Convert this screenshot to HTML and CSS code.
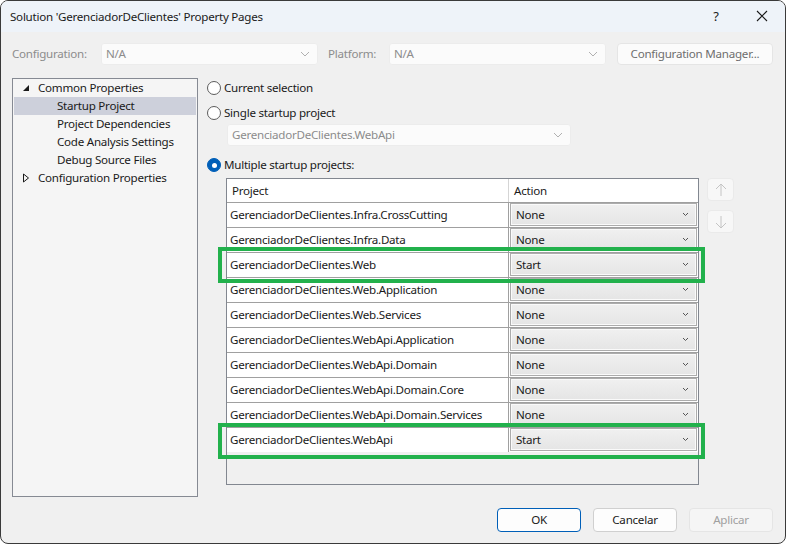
FILE: index.html
```html
<!DOCTYPE html>
<html>
<head>
<meta charset="utf-8">
<link rel="stylesheet" href="styles.css">
</head>
<body>
<div class="window">
  <div class="titlebar">
    <span class="title">Solution 'GerenciadorDeClientes' Property Pages</span>
    <span class="tb-help">?</span>
    <span class="tb-close"><svg width="12" height="12" viewBox="0 0 12 12"><path d="M1 1 L11 11 M11 1 L1 11" stroke="#1a1a1a" stroke-width="1.1" fill="none"/></svg></span>
  </div>
  <div class="content">
    <div class="config-row">
      <span class="lbl lbl-config">Configuration:</span>
      <div class="combo combo-config"><span>N/A</span><svg class="chev" width="10" height="6" viewBox="0 0 10 6"><path d="M1 1 L5 5 L9 1" stroke="#b0b0b0" fill="none"/></svg></div>
      <span class="lbl lbl-platform">Platform:</span>
      <div class="combo combo-platform"><span>N/A</span><svg class="chev" width="10" height="6" viewBox="0 0 10 6"><path d="M1 1 L5 5 L9 1" stroke="#b0b0b0" fill="none"/></svg></div>
      <div class="btn btn-cm">Configuration Manager...</div>
    </div>
    <div class="main">
      <div class="tree">
        <div class="node"><svg class="tri" width="8" height="8" viewBox="0 0 8 8"><path d="M7 1 L7 7 L1 7 Z" fill="#1a1a1a"/></svg><span>Common Properties</span></div>
        <div class="node child selected"><span>Startup Project</span></div>
        <div class="node child"><span>Project Dependencies</span></div>
        <div class="node child"><span>Code Analysis Settings</span></div>
        <div class="node child"><span>Debug Source Files</span></div>
        <div class="node"><svg class="tri tri-c" width="8" height="10" viewBox="0 0 8 10"><path d="M1.5 1 L6.5 5 L1.5 9 Z" fill="none" stroke="#1a1a1a"/></svg><span>Configuration Properties</span></div>
      </div>
      <div class="right">
        <div class="radio-row r1"><span class="radio"></span><span class="rtext">Current selection</span></div>
        <div class="radio-row r2"><span class="radio"></span><span class="rtext">Single startup project</span></div>
        <div class="combo combo-single"><span>GerenciadorDeClientes.WebApi</span><svg class="chev" width="10" height="6" viewBox="0 0 10 6"><path d="M1 1 L5 5 L9 1" stroke="#b0b0b0" fill="none"/></svg></div>
        <div class="radio-row r3"><span class="radio on"></span><span class="rtext">Multiple startup projects:</span></div>
        <div class="grid-area">
          <div class="grid">
            <div class="hrow"><div class="hcell hp">Project</div><div class="hcell ha">Action</div></div>
            <div class="row"><div class="pcell">GerenciadorDeClientes.Infra.CrossCutting</div><div class="acell"><div class="acombo">None<svg class="achev" width="7" height="5" viewBox="0 0 7 5"><path d="M1 1 L3.5 3.5 L6 1" stroke="#555" fill="none"/></svg></div></div></div>
            <div class="row"><div class="pcell">GerenciadorDeClientes.Infra.Data</div><div class="acell"><div class="acombo">None<svg class="achev" width="7" height="5" viewBox="0 0 7 5"><path d="M1 1 L3.5 3.5 L6 1" stroke="#555" fill="none"/></svg></div></div></div>
            <div class="row"><div class="pcell">GerenciadorDeClientes.Web</div><div class="acell"><div class="acombo">Start<svg class="achev" width="7" height="5" viewBox="0 0 7 5"><path d="M1 1 L3.5 3.5 L6 1" stroke="#555" fill="none"/></svg></div></div></div>
            <div class="row"><div class="pcell">GerenciadorDeClientes.Web.Application</div><div class="acell"><div class="acombo">None<svg class="achev" width="7" height="5" viewBox="0 0 7 5"><path d="M1 1 L3.5 3.5 L6 1" stroke="#555" fill="none"/></svg></div></div></div>
            <div class="row"><div class="pcell">GerenciadorDeClientes.Web.Services</div><div class="acell"><div class="acombo">None<svg class="achev" width="7" height="5" viewBox="0 0 7 5"><path d="M1 1 L3.5 3.5 L6 1" stroke="#555" fill="none"/></svg></div></div></div>
            <div class="row"><div class="pcell">GerenciadorDeClientes.WebApi.Application</div><div class="acell"><div class="acombo">None<svg class="achev" width="7" height="5" viewBox="0 0 7 5"><path d="M1 1 L3.5 3.5 L6 1" stroke="#555" fill="none"/></svg></div></div></div>
            <div class="row"><div class="pcell">GerenciadorDeClientes.WebApi.Domain</div><div class="acell"><div class="acombo">None<svg class="achev" width="7" height="5" viewBox="0 0 7 5"><path d="M1 1 L3.5 3.5 L6 1" stroke="#555" fill="none"/></svg></div></div></div>
            <div class="row"><div class="pcell">GerenciadorDeClientes.WebApi.Domain.Core</div><div class="acell"><div class="acombo">None<svg class="achev" width="7" height="5" viewBox="0 0 7 5"><path d="M1 1 L3.5 3.5 L6 1" stroke="#555" fill="none"/></svg></div></div></div>
            <div class="row"><div class="pcell">GerenciadorDeClientes.WebApi.Domain.Services</div><div class="acell"><div class="acombo">None<svg class="achev" width="7" height="5" viewBox="0 0 7 5"><path d="M1 1 L3.5 3.5 L6 1" stroke="#555" fill="none"/></svg></div></div></div>
            <div class="row"><div class="pcell">GerenciadorDeClientes.WebApi</div><div class="acell"><div class="acombo">Start<svg class="achev" width="7" height="5" viewBox="0 0 7 5"><path d="M1 1 L3.5 3.5 L6 1" stroke="#555" fill="none"/></svg></div></div></div>
            <div class="hl hl-web"></div>
            <div class="hl hl-webapi"></div>
          </div>
          <div class="movers">
            <div class="mbtn"><svg width="12" height="14" viewBox="0 0 12 14"><path d="M6 13 L6 1 M1 6 L6 1 L11 6" stroke="#c4c4c4" fill="none"/></svg></div>
            <div class="mbtn"><svg width="12" height="14" viewBox="0 0 12 14"><path d="M6 1 L6 13 M1 8 L6 13 L11 8" stroke="#c4c4c4" fill="none"/></svg></div>
          </div>
        </div>
      </div>
    </div>
    <div class="footer">
      <div class="btn fbtn ok">OK</div>
      <div class="btn fbtn">Cancelar</div>
      <div class="btn fbtn disabled">Aplicar</div>
    </div>
  </div>
</div>
</body>
</html>
```
FILE: styles.css
```css
* { box-sizing: border-box; }
html, body { margin: 0; padding: 0; background: #ffffff; }
body {
  font-family: "Noto Sans", "Open Sans", sans-serif;
  font-size: 11.6px;
  letter-spacing: -0.25px;
  color: #1a1a1a;
}
.window {
  width: 786px;
  height: 544px;
  border: 1px solid #3a3a3a;
  border-radius: 8px;
  overflow: hidden;
  background: #f0f0f0;
  display: flex;
  flex-direction: column;
}
.titlebar {
  height: 31px;
  background: #eef3f9;
  display: flex;
  align-items: center;
  padding-left: 9px;
  padding-bottom: 1px;
  flex-shrink: 0;
}
.title { flex: 1; }
.tb-help { width: 46px; text-align: center; font-size: 13px; }
.tb-close { width: 46px; display: flex; justify-content: center; }
.content { flex: 1; display: flex; flex-direction: column; }
.config-row {
  display: flex;
  align-items: center;
  margin-top: 11px;
  height: 22px;
  padding-left: 11px;
}
.lbl { color: #8c8c8c; padding-bottom: 2px; }
.lbl-config { width: 89px; }
.lbl-platform { width: 61px; margin-left: 10px; }
.combo {
  height: 22px;
  background: #fbfbfb;
  border: 1px solid #ececec;
  border-radius: 3px;
  display: flex;
  align-items: center;
  justify-content: space-between;
  padding: 0 7px 1px 4px;
  color: #8c8c8c;
}
.combo-config, .combo-platform { width: 217px; }
.btn {
  height: 22px;
  border: 1px solid #e5e5e5;
  border-radius: 4px;
  background: #fbfbfb;
  display: flex;
  align-items: center;
  justify-content: center;
  padding-bottom: 1px;
}
.btn-cm { width: 156px; margin-left: 11px; color: #6e6e6e; }
.main {
  display: flex;
  margin-top: 13px;
  padding-left: 11px;
}
.tree {
  width: 186px;
  height: 419px;
  border: 1px solid #868a93;
  background: #f5f5f5;
  padding: 0 1px 1px 1px;
}
.node {
  height: 18px;
  display: flex;
  align-items: center;
  padding-left: 8px;
  padding-bottom: 1px;
}
.node .tri { margin-right: 8px; }
.node.child { padding-left: 43px; }
.node.selected { background: #cdd0db; }
.right {
  margin-left: 9px;
  width: 566px;
  display: flex;
  flex-direction: column;
}
.radio-row {
  height: 18px;
  display: flex;
  align-items: center;
}
.rtext { margin-bottom: 2px; }
.r1 { margin-top: 1px; }
.r2 { margin-top: 7px; }
.r3 { margin-top: 10px; }
.radio {
  width: 14px;
  height: 14px;
  border: 1px solid #5c5c5c;
  border-radius: 50%;
  background: #fff;
  margin-right: 3px;
  position: relative;
}
.radio.on { background: #005fb8; border-color: #005fb8; }
.radio.on::after {
  content: "";
  position: absolute;
  left: 3.5px; top: 3.5px;
  width: 5px; height: 5px;
  border-radius: 50%;
  background: #fff;
}
.combo-single { width: 344px; margin-left: 20px; margin-top: 2px; }
.grid-area {
  display: flex;
  margin-top: 4px;
  margin-left: 19px;
}
.grid {
  position: relative;
  width: 473px;
  height: 307px;
  border: 1px solid #828790;
  background: #f0f0f0;
}
.hrow {
  display: grid;
  grid-template-columns: 282px 1fr;
  height: 23px;
  background: #fff;
}
.hcell { display: flex; align-items: center; padding-left: 5px; padding-bottom: 1px; }
.hp { border-right: 1px solid #d5d5d5; }
.row {
  display: grid;
  grid-template-columns: 282px 1fr;
  height: 25px;
}
.pcell {
  background: #fff;
  border-top: 1px solid #a0a0a0;
  border-right: 1px solid #a0a0a0;
  display: flex;
  align-items: center;
  padding-left: 3px;
  padding-bottom: 1px;
}
.acell {
  background: #fff;
  border-top: 1px solid #a0a0a0;
  padding: 0 1px 1px 1px;
}
.row:last-of-type .pcell, .row:last-of-type .acell { border-bottom: 1px solid #a0a0a0; }
.acombo {
  height: 100%;
  border: 1px solid #acacac;
  box-shadow: inset 0 0 0 1px #fafafa;
  background: linear-gradient(#f0f0f0, #e5e5e5);
  display: flex;
  align-items: center;
  justify-content: space-between;
  padding: 0 7px 1px 5px;
}
.hl {
  position: absolute;
  left: -9px;
  width: 487px;
  height: 36px;
  border: 4px solid #22b14c;
}
.hl-web { top: 68px; }
.hl-webapi { top: 244px; }
.movers {
  margin-left: 8px;
  display: flex;
  flex-direction: column;
  gap: 9px;
}
.mbtn {
  width: 27px;
  height: 23px;
  border: 1px solid #eaeaea;
  border-radius: 4px;
  background: #f7f7f7;
  display: flex;
  align-items: center;
  justify-content: center;
}
.footer {
  display: flex;
  justify-content: flex-end;
  gap: 12px;
  margin-top: 11px;
  padding-right: 12px;
}
.fbtn { width: 84px; height: 24px; border-color: #d0d0d0; background: #fdfdfd; }
.fbtn.ok { border-color: #005fb8; }
.fbtn.disabled { background: #f5f5f5; border-color: #e5e5e5; color: #a0a0a0; }
```
